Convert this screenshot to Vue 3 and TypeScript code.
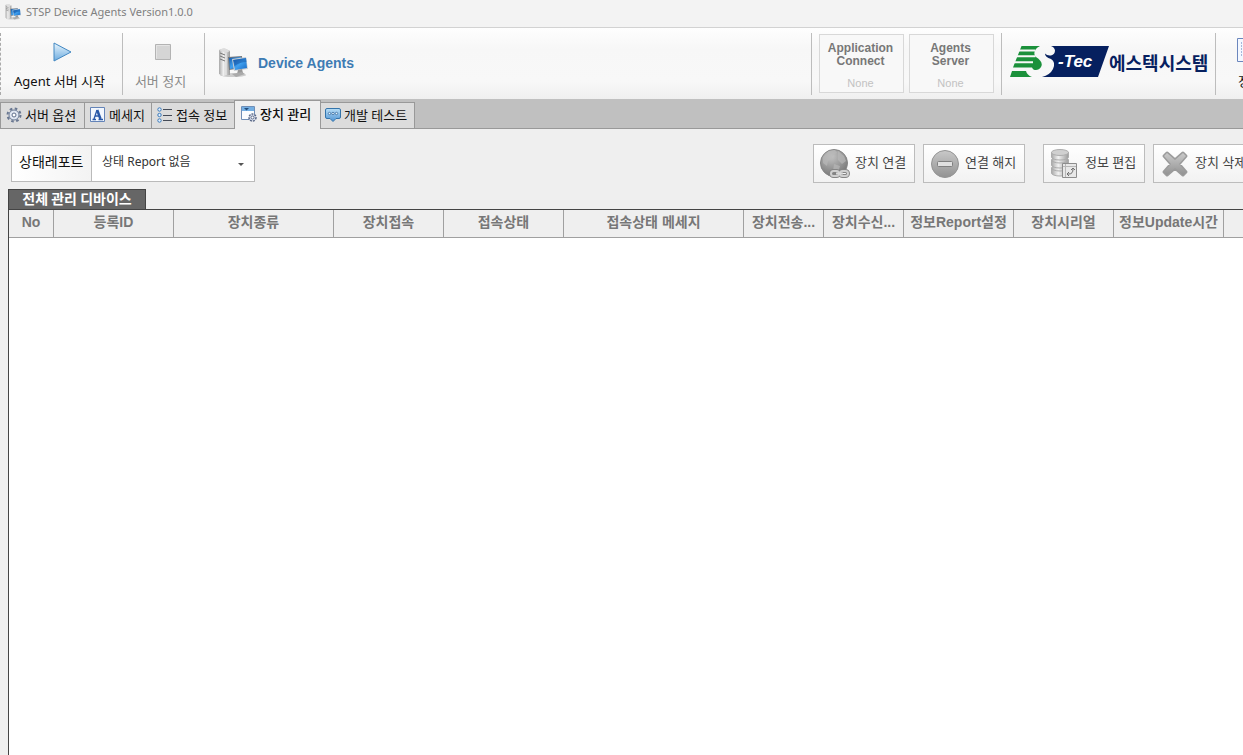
<script setup lang="ts">
import { ref } from 'vue'

interface Tab { id: string; label: string }
interface Column { label: string; width: number | null }
interface Status { lines: string[]; state: string }

const tabs: Tab[] = [
  { id: 'options', label: '서버 옵션' },
  { id: 'messages', label: '메세지' },
  { id: 'connections', label: '접속 정보' },
  { id: 'devices', label: '장치 관리' },
  { id: 'test', label: '개발 테스트' },
]
const activeTab = ref('devices')
const report = ref('none')

const statuses: Status[] = [
  { lines: ['Application', 'Connect'], state: 'None' },
  { lines: ['Agents', 'Server'], state: 'None' },
]

const columns: Column[] = [
  { label: 'No', width: 45 },
  { label: '등록ID', width: 120 },
  { label: '장치종류', width: 160 },
  { label: '장치접속', width: 110 },
  { label: '접속상태', width: 120 },
  { label: '접속상태 메세지', width: 180 },
  { label: '장치전송...', width: 80 },
  { label: '장치수신...', width: 80 },
  { label: '정보Report설정', width: 110 },
  { label: '장치시리얼', width: 100 },
  { label: '정보Update시간', width: 110 },
  { label: '', width: null },
]
</script>

<template>
  <div class="app">
    <svg class="defs" width="0" height="0" aria-hidden="true">
      <defs>
        <linearGradient id="metal" x1="0" x2="1"><stop offset="0" stop-color="#a8a8a8" /><stop offset=".4" stop-color="#f1f1f1" /><stop offset="1" stop-color="#9b9b9b" /></linearGradient>
        <linearGradient id="screen" x1="0" y1="0" x2="1" y2="1"><stop offset="0" stop-color="#1558a8" /><stop offset=".5" stop-color="#3f9fee" /><stop offset="1" stop-color="#1769c5" /></linearGradient>
        <linearGradient id="play" x1="0" y1="0" x2="0" y2="1"><stop offset="0" stop-color="#e8f5fd" /><stop offset="1" stop-color="#6cabdf" /></linearGradient>
        <linearGradient id="blue" x1="0" y1="0" x2="0" y2="1"><stop offset="0" stop-color="#b8def6" /><stop offset="1" stop-color="#4f94d4" /></linearGradient>
        <linearGradient id="gray" x1="0" y1="0" x2="0" y2="1"><stop offset="0" stop-color="#c9c9c9" /><stop offset="1" stop-color="#929292" /></linearGradient>
        <radialGradient id="globe" cx=".4" cy=".25" r=".8"><stop offset="0" stop-color="#c4c4c4" /><stop offset="1" stop-color="#737373" /></radialGradient>
        <symbol id="computer" viewBox="0 0 30 30">
          <ellipse cx="15" cy="27" rx="13" ry="2" fill="#ccc" />
          <path d="M1 2 6 0 12 3V27L5 28 1 26Z" fill="url(#metal)" />
          <path d="M1 2 6 0 12 3 8 5Z" fill="#ddd" />
          <path d="M2 5 7 7M2 8 7 10M2 11 7 13" stroke="#777" />
          <path d="M8 5V27" stroke="#eee" />
          <path d="M10 9 24 8 25 20 11 22Z" fill="#72777d" />
          <path d="M11 10 23 9 24 19 12 21Z" fill="url(#screen)" />
          <path d="M14 11 28 9 30 21 16 23Z" fill="#c8cdd2" />
          <path d="M15 12 28 10 29 20 17 22Z" fill="url(#screen)" />
          <path d="M16 12 28 10 28.500 14Q22 14 16.500 18Z" fill="#155aab" opacity=".55" />
          <path d="M20 22 24 21 25 25 19 26Z" fill="#999" />
          <path d="M14 26 24 24 27 26 18 29Z" fill="#aaa" />
        </symbol>
      </defs>
    </svg>

    <header class="titlebar">
      <svg class="title-icon" viewBox="0 0 30 30" aria-hidden="true"><use href="#computer" /></svg>
      <span>STSP Device Agents Version1.0.0</span>
    </header>

    <div class="toolbar">
      <button class="tool start" type="button">
        <svg width="22" height="22" viewBox="0 0 22 22" aria-hidden="true"><path d="M3 2 20 11 3 20Z" fill="url(#play)" stroke="#4388c2" stroke-linejoin="round" /></svg>
        <span>Agent 서버 시작</span>
      </button>
      <button class="tool stop" type="button">
        <svg width="22" height="22" viewBox="0 0 22 22" aria-hidden="true"><path d="M3.500 3.500h15v15h-15z" fill="#d5d5d5" stroke="#b3b3b3" /><path d="M4.500 17.500v-13h13" fill="none" stroke="#e4e4e4" /></svg>
        <span>서버 정지</span>
      </button>
      <div class="brand">
        <svg width="30" height="30" aria-hidden="true"><use href="#computer" /></svg>
        <h1>Device Agents</h1>
      </div>
      <div class="statuses">
        <div v-for="s in statuses" :key="s.lines[0]" class="status">
          <strong><span v-for="line in s.lines" :key="line">{{ line }}</span></strong>
          <small>{{ s.state }}</small>
        </div>
      </div>
      <div class="logo">
        <svg width="99" height="32" viewBox="0 0 99 32" role="img" aria-label="S-Tec">
          <path d="M41 0H99L88 31H32Q40 29 43 23 46 16 41 13 35 11 35 7.500 37 10 41 9.500 45 8.500 45 4.500 44.500 1 41 0Z" fill="#06205f" />
          <path d="M11.500 0H30C24 3 23 8 26 11 31 14 33 18 31 21 29 25 23 25 22 21.500H3Z" fill="#1b913b" />
          <path d="M8 4.500H25M6 10.200H25.500M3 16.200H23" stroke="#f8f8f8" stroke-width="2" />
          <path d="M2 25H16Q17 29 22 31H0Z" fill="#1b913b" />
          <text x="48" y="21" class="tec">-Tec</text>
        </svg>
        <span>에스텍시스템</span>
      </div>
      <button class="tool info" type="button">
        <svg width="30" height="26" viewBox="0 0 30 26" aria-hidden="true"><path d="M.5 1.500h28v23H.5z" fill="#f4f8ff" stroke="#6b86bd" /><path d="M4 6h21M4 9h21M4 12h21M4 15h21M4 18h21" stroke="#5876b7" stroke-dasharray="1 1" /></svg>
        <span>정보</span>
      </button>
    </div>

    <nav class="tabs" role="tablist">
      <button v-for="tab in tabs" :key="tab.id" class="tab" :class="[tab.id, { active: activeTab === tab.id }]" type="button" role="tab" :aria-selected="activeTab === tab.id" @click="activeTab = tab.id">
        <svg width="16" height="16" viewBox="0 0 16 16" aria-hidden="true">
          <template v-if="tab.id === 'options'">
            <circle cx="8" cy="8" r="6.500" fill="none" stroke="#697791" stroke-width="2" stroke-dasharray="2.600 2.500" />
            <circle cx="8" cy="8" r="5" fill="#e1e7f2" stroke="#6b7a96" />
            <circle cx="8" cy="8" r="2" fill="#fff" stroke="#5e6d8b" />
          </template>
          <template v-else-if="tab.id === 'messages'">
            <path d="M.5.5h14v14H.5z" fill="#f2f7fe" stroke="#6484b8" />
            <path d="M2.500 12.500h3.500M8.500 12.500h4.500M4 12 7 3M5.500 9H9.500" fill="none" stroke="#2858a8" stroke-width="1.300" />
            <path d="M7.200 3 10.500 12" fill="none" stroke="#2858a8" stroke-width="2.500" />
          </template>
          <template v-else-if="tab.id === 'connections'">
            <g fill="#e5f1ff" stroke="#3979b9"><circle cx="2.500" cy="2.500" r="1.700" /><circle cx="2.500" cy="8" r="1.700" /><circle cx="2.500" cy="13.500" r="1.700" /></g>
            <path d="M6 2.500h9M6 8.500h9M6 13.500h9" stroke="#454b57" />
          </template>
          <template v-else-if="tab.id === 'devices'">
            <path d="M.5.5h13v13H.5z" fill="#fafdff" stroke="#6f8eb6" />
            <path d="M1 1h12v4H1z" fill="#73afe3" /><path d="M3 2h5L5.500 4.500Z" fill="#234c7c" />
            <circle cx="11.500" cy="11.500" r="3.500" fill="#dce2ef" stroke="#596887" stroke-width="1.500" stroke-dasharray="2 1" />
            <circle cx="11.500" cy="11.500" r="1.500" fill="#fff" stroke="#596887" />
          </template>
          <template v-else>
            <path d="M2 1.500h12q1.500 0 1.500 1.500v7q0 1.500-1.500 1.500h-3L8 14.500 5 11.500H2Q.5 11.500.5 10V3Q.5 1.500 2 1.500Z" fill="url(#blue)" stroke="#3474aa" />
            <g fill="#e8f7ff" stroke="#255a91" stroke-width=".7"><circle cx="4.500" cy="6.500" r="1.200" /><circle cx="8" cy="6.500" r="1.200" /><circle cx="11.500" cy="6.500" r="1.200" /></g>
          </template>
        </svg>
        <span>{{ tab.label }}</span>
      </button>
    </nav>

    <main>
      <div class="actions">
        <div class="report">
          <label for="report">상태레포트</label>
          <div class="combo">
            <select id="report" v-model="report"><option value="none">상태 Report 없음</option></select>
            <svg width="6" height="3" viewBox="0 0 6 3" aria-hidden="true"><path d="M0 0h6L3 3Z" fill="#555" /></svg>
          </div>
        </div>
        <div class="action-group">
          <button type="button">
            <svg width="30" height="32" viewBox="0 0 30 32" aria-hidden="true">
              <circle cx="14" cy="15" r="13.500" fill="url(#globe)" stroke="#858585" />
              <path d="M3 9 9 3 15 2 17 5 13 7 12 11 8 13 7 18 3 15ZM18 3 24 8 26 13 22 16 18 12ZM14 16 20 18 18 25 13 23Z" fill="#b8b8b8" opacity=".7" />
              <g fill="none" stroke="#858585" stroke-width="4"><rect x="11" y="23" width="8" height="5" rx="2.500" /><rect x="20" y="23" width="8" height="5" rx="2.500" /></g>
              <g fill="none" stroke="#d0d0d0" stroke-width="2"><rect x="11" y="23" width="8" height="5" rx="2.500" /><rect x="20" y="23" width="8" height="5" rx="2.500" /></g>
              <path d="M16 25.500h7" stroke="#d9d9d9" stroke-width="2" />
            </svg>
            <span>장치 연결</span>
          </button>
          <button type="button">
            <svg width="30" height="32" viewBox="0 0 30 32" aria-hidden="true"><circle cx="15" cy="16" r="13.500" fill="url(#gray)" stroke="#949494" /><rect x="7.500" y="13.500" width="15" height="5" rx="1" fill="#e0e0e0" stroke="#808080" /></svg>
            <span>연결 해지</span>
          </button>
          <button class="edit" type="button">
            <svg width="30" height="32" viewBox="0 0 30 32" aria-hidden="true">
              <g fill="url(#metal)" stroke="#adadad"><path d="M1.500 20v5c0 4 17 4 17 0v-5" /><ellipse cx="10" cy="20" rx="8.500" ry="3" /><path d="M1.500 12v5c0 4 17 4 17 0v-5" /><ellipse cx="10" cy="12" rx="8.500" ry="3" /><path d="M1.500 4v5c0 4 17 4 17 0V4" /><ellipse cx="10" cy="4.500" rx="8.500" ry="3" fill="#d0d0d0" /></g>
              <path d="M12.500 15.500h14v14h-14z" fill="#e8e8e8" stroke="#8d8d8d" /><path d="M13 18.500h13M15.500 16v13" stroke="#b8b8b8" />
              <path d="M17 26h2q4 0 4-5M19 24l-2 2 2 2M21 22l2-2 2 2" fill="none" stroke="#707070" />
            </svg>
            <span>정보 편집</span>
          </button>
          <button type="button">
            <svg width="30" height="32" viewBox="0 0 30 32" aria-hidden="true"><path d="M7 5 15 12 23 5 26 8 19 16 26 24 23 27 15 20 7 27 4 24 11 16 4 8Z" fill="url(#gray)" stroke="#9b9b9b" stroke-linejoin="round" stroke-width="3" /><path d="M7 5 15 12 23 5 26 8 19 16 26 24 23 27 15 20 7 27 4 24 11 16 4 8Z" fill="url(#gray)" /></svg>
            <span>장치 삭제</span>
          </button>
        </div>
      </div>

      <section class="devices-panel">
        <h2>전체 관리 디바이스</h2>
        <div class="grid">
          <table aria-label="전체 관리 디바이스">
            <colgroup><col v-for="(c, i) in columns" :key="i" :style="c.width ? { width: c.width + 'px' } : {}"></colgroup>
            <thead><tr><th v-for="(c, i) in columns" :key="i" scope="col">{{ c.label }}</th></tr></thead>
          </table>
        </div>
      </section>
    </main>
  </div>
</template>

<style>
body { margin: 0; }
</style>

<style scoped>
* { box-sizing: border-box; }
.app { display: flex; flex-direction: column; min-height: 100vh; overflow: hidden; background: #efefef; color: #111; font: 13px/16px "Noto Sans", "Noto Sans CJK KR", sans-serif; }
.defs { position: absolute; }
button { font: inherit; color: inherit; cursor: pointer; }
svg { flex: none; }
span { white-space: nowrap; }
.titlebar { display: flex; align-items: center; gap: 5px; height: 28px; padding: 0 5px 4px; background: #f3f3f3; border-bottom: 1px solid #d2d2d2; color: #808080; font-size: 11px; }
.title-icon { width: 16px; height: 16px; }
.toolbar { display: flex; height: 71px; padding: 5px 0 4px; background: linear-gradient(#fefefe, #f7f7f7 30%, #f8f8f8 75%, #efefef); }
.tool { display: flex; flex: none; flex-direction: column; align-items: center; gap: 10px; padding: 8px 0 0; background: none; border: 0; border-right: 1px solid #bdbdbd; }
.start { width: 123px; border-left: 1px dashed #aaa; }
.stop { width: 82px; padding-right: 2px; color: #8a8a8a; }
.start span, .stop span { padding-right: 4px; }
.brand { display: flex; flex: 1; align-items: center; gap: 10px; padding: 0 0 2px 13px; }
h1 { margin: 0; color: #3e7cb4; font: bold 14px/16px "Liberation Sans", sans-serif; }
.statuses { display: flex; gap: 5px; padding: 1px 7px; border-left: 1px solid #bdbdbd; border-right: 1px solid #bdbdbd; }
.status { display: flex; flex-direction: column; align-items: center; justify-content: space-between; width: 85px; height: 59px; padding: 7px 2px 2px 0; border: 1px solid #d8d8d8; background: #f8f8f8; color: #777; font: 12px/13px "Liberation Sans", sans-serif; }
.status strong { display: flex; flex-direction: column; align-items: center; }
.status small { color: #c2c2c2; font-size: 11px; }
.logo { display: flex; align-items: center; width: 214px; padding: 0 0 4px 8px; border-right: 1px solid #bdbdbd; color: #06205f; font: bold 18px/24px "Noto Sans CJK KR", sans-serif; }
.tec { fill: #fff; font: italic bold 17px "Liberation Sans", sans-serif; }
.info { width: 72px; margin-right: -45px; padding-top: 4px; border: 0; }
.info span { padding-right: 4px; }
.tabs { display: flex; align-items: flex-end; height: 30px; background: #c0c0c0; border-bottom: 1px solid #999; }
.tab { display: flex; align-items: center; gap: 3px; height: 26px; padding: 0 5px 2px; border: 1px solid #999; border-bottom: 0; border-left: 0; background: #dcdcdc; }
.tab.options { width: 85px; border-left: 1px solid #999; }
.tab.messages { width: 67px; }
.tab.connections { width: 82px; border-right: 0; }
.tab.devices { width: 87px; padding-left: 6px; border-left: 1px solid #999; }
.tab.test { width: 94px; padding-left: 4px; }
.tab.active { height: 29px; padding-bottom: 3px; margin-bottom: -1px; background: #efefef; font-weight: 500; }
main { display: flex; flex: 1; flex-direction: column; padding: 15px 0 0 8px; }
.actions { display: flex; justify-content: space-between; height: 45px; padding-left: 3px; }
.report { display: flex; height: 37px; margin-top: 1px; border: 1px solid #bababa; background: #fff; }
.report label { display: flex; align-items: center; width: 80px; padding: 0 0 4px 7px; border-right: 1px solid #bababa; background: linear-gradient(90deg, #fff, #f3f3f3); white-space: nowrap; font-size: 14px; }
.combo { position: relative; }
select { appearance: none; width: 162px; height: 35px; padding: 0 20px 4px 10px; border: 0; border-radius: 0; background: #fff; color: #333; font: 12px/16px "Noto Sans", "Noto Sans CJK KR", sans-serif; }
.combo svg { position: absolute; right: 10px; top: 17px; pointer-events: none; }
.action-group { display: flex; flex: none; gap: 8px; margin-right: -12px; }
.action-group button { display: flex; align-items: center; gap: 5px; width: 102px; height: 39px; padding: 0 0 0 6px; border: 1px solid #bcbcbc; background: linear-gradient(#fff, #f2f2f2); color: #444; }
.action-group span { padding-bottom: 3px; }
.action-group .edit { margin-left: 10px; }
.devices-panel { display: flex; flex: 1; flex-direction: column; align-items: flex-start; }
h2 { margin: 0; width: 138px; height: 20px; border: 1px solid #444; border-bottom: 0; background: #666; color: #fff; font: bold 14px/17px "Noto Sans CJK KR", sans-serif; text-align: center; white-space: nowrap; }
.grid { flex: 1; width: 100%; border-top: 1px solid #444; border-left: 1px solid #444; background: #fff; }
table { width: 100%; table-layout: fixed; border-collapse: separate; border-spacing: 0; }
th { height: 28px; padding: 0 0 3px; border-right: 1px solid #a0a0a0; border-bottom: 1px solid #a0a0a0; background: #efefef; color: #777; font: bold 14px/16px "Liberation Sans", "Noto Sans CJK KR", sans-serif; white-space: nowrap; }
th:last-child { border-right: 0; }
</style>
